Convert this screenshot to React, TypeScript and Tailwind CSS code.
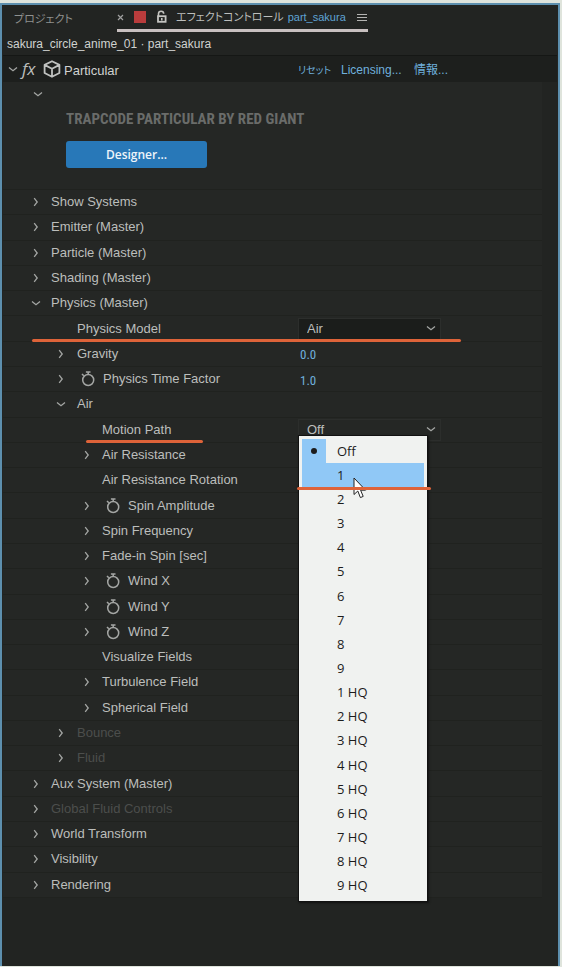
import React, { useState } from "react";

interface ParamRow {
  label: string;
  level: number;
  arrow?: "open" | "closed";
  watch?: boolean;
  disabled?: boolean;
  value?: string;
  select?: string[];
  mark?: "long" | "short";
}

const motionPaths = [
  "Off", "1", "2", "3", "4", "5", "6", "7", "8", "9",
  "1 HQ", "2 HQ", "3 HQ", "4 HQ", "5 HQ", "6 HQ", "7 HQ", "8 HQ", "9 HQ",
];

const rows: ParamRow[] = [
  { label: "Show Systems", level: 0, arrow: "closed" },
  { label: "Emitter (Master)", level: 0, arrow: "closed" },
  { label: "Particle (Master)", level: 0, arrow: "closed" },
  { label: "Shading (Master)", level: 0, arrow: "closed" },
  { label: "Physics (Master)", level: 0, arrow: "open" },
  { label: "Physics Model", level: 1, select: ["Air", "Bounce", "Fluid"], mark: "long" },
  { label: "Gravity", level: 1, arrow: "closed", value: "0.0" },
  { label: "Physics Time Factor", level: 1, arrow: "closed", watch: true, value: "1.0" },
  { label: "Air", level: 1, arrow: "open" },
  { label: "Motion Path", level: 2, select: motionPaths, mark: "short" },
  { label: "Air Resistance", level: 2, arrow: "closed" },
  { label: "Air Resistance Rotation", level: 2 },
  { label: "Spin Amplitude", level: 2, arrow: "closed", watch: true },
  { label: "Spin Frequency", level: 2, arrow: "closed" },
  { label: "Fade-in Spin [sec]", level: 2, arrow: "closed" },
  { label: "Wind X", level: 2, arrow: "closed", watch: true },
  { label: "Wind Y", level: 2, arrow: "closed", watch: true },
  { label: "Wind Z", level: 2, arrow: "closed", watch: true },
  { label: "Visualize Fields", level: 2 },
  { label: "Turbulence Field", level: 2, arrow: "closed" },
  { label: "Spherical Field", level: 2, arrow: "closed" },
  { label: "Bounce", level: 1, arrow: "closed", disabled: true },
  { label: "Fluid", level: 1, arrow: "closed", disabled: true },
  { label: "Aux System (Master)", level: 0, arrow: "closed" },
  { label: "Global Fluid Controls", level: 0, arrow: "closed", disabled: true },
  { label: "World Transform", level: 0, arrow: "closed" },
  { label: "Visibility", level: 0, arrow: "closed" },
  { label: "Rendering", level: 0, arrow: "closed" },
];

const indents = ["pl-[28px]", "pl-[53px]", "pl-[79px]"];

function Chevron({ open }: { open?: boolean }) {
  return (
    <svg width="10" height="10" viewBox="0 0 10 10" fill="none" stroke="#a4a6a4" strokeWidth="1.3">
      <path d={open ? "M1 3.5 L5 6.7 L9 3.5" : "M3.2 1.2 L6.2 5 L3.2 8.8"} />
    </svg>
  );
}

function Stopwatch() {
  return (
    <svg width="14" height="16" viewBox="0 0 14 16" fill="none" stroke="#a4a6a4" strokeWidth="1.5">
      <circle cx="7.2" cy="9" r="5.5" />
      <path d="M4.9 1 H9.5 M7.2 1 V3.6 M1 3 L2.8 4.8" />
    </svg>
  );
}

function MotionPathMenu({ current, onPick }: { current: string; onPick: (v: string) => void }) {
  return (
    <div
      role="listbox"
      aria-label="Motion Path"
      className="absolute left-0 top-[17px] z-10 flex h-[467px] w-[130px] flex-col border border-[#111] bg-[#f0f2f0] p-[3px] font-['Open_Sans','Noto_Sans',sans-serif] text-[13px] text-[#1c1c1c] shadow-[1px_1px_2px_#111]"
    >
      {motionPaths.map((name) => (
        <button
          key={name}
          role="option"
          aria-selected={name === current}
          onClick={() => onPick(name)}
          className={`flex min-h-0 grow basis-0 items-center text-left ${name === "1" ? "bg-[#90c8f6]" : ""}`}
        >
          <span
            className={`flex w-6 items-center justify-center self-stretch ${name === current ? "bg-[#90c8f6]" : ""}`}
          >
            {name === current && <span className="size-[6px] rounded-full bg-[#1c1c1c]" />}
          </span>
          <span className="pl-[11px] leading-4">{name}</span>
        </button>
      ))}
      <svg className="absolute left-[54px] top-[41px]" width="14" height="22" viewBox="0 0 14 22">
        <path
          d="M1 1 V17.5 L4.8 14 L7.4 20.6 L10.2 19.4 L7.6 13.2 H12.6 Z"
          fill="#fff"
          stroke="#222"
          strokeWidth="1"
        />
      </svg>
      <span className="absolute -left-[2px] top-[51px] h-[3px] w-[134px] rounded-full bg-[#de6339]" />
    </div>
  );
}

function Row({ row }: { row: ParamRow }) {
  const [value, setValue] = useState(row.select ? row.select[0] : "");
  const id = row.label.toLowerCase().replace(/ /g, "-");
  const isMotion = row.label === "Motion Path";

  return (
    <div className="relative flex min-h-0 grow basis-0 items-center border-b border-[#20221f]">
      <div className={`flex w-[295px] shrink-0 items-center ${indents[row.level]}`}>
        <span className={`flex shrink-0 ${row.level === 1 ? "w-[21px]" : "w-5"}`}>
          {row.arrow && (
            <button aria-label={`Toggle ${row.label}`}>
              <Chevron open={row.arrow === "open"} />
            </button>
          )}
        </span>
        {row.watch && (
          <button aria-label={`Animate ${row.label}`} className="w-[26px] shrink-0 pl-1">
            <Stopwatch />
          </button>
        )}
        <label
          htmlFor={row.select ? id : undefined}
          className={`whitespace-nowrap leading-4 ${row.disabled ? "text-[#4c4e4c]" : ""}`}
        >
          {row.label}
        </label>
      </div>
      {row.value && (
        <span className="pl-[2px] pt-[3px] font-['Roboto_Condensed',sans-serif] text-[13px] leading-4 text-[#6fb0dc]">
          {row.value}
        </span>
      )}
      {row.select && (
        <div className="relative h-[22px] w-[143px]">
          <select
            id={id}
            value={value}
            onChange={(e) => setValue(e.target.value)}
            className={`size-full appearance-none border border-[#2c2e2c] pl-[8px] leading-4 ${isMotion ? "bg-[#252725]" : "bg-[#1b1d1b]"}`}
          >
            {row.select.map((o) => (
              <option key={o}>{o}</option>
            ))}
          </select>
          <span className="pointer-events-none absolute right-[5px] top-[5px]">
            <Chevron open />
          </span>
        </div>
      )}
      {isMotion && (
        <div className="absolute left-[295px] top-0">
          <MotionPathMenu current={value} onPick={setValue} />
        </div>
      )}
      {row.mark === "long" && (
        <span className="absolute -bottom-px left-[29px] z-10 h-[3px] w-[429px] rounded-full bg-[#de6339]" />
      )}
      {row.mark === "short" && (
        <span className="absolute -bottom-px left-[83px] z-10 h-[3px] w-[117px] rounded-full bg-[#de6339]" />
      )}
    </div>
  );
}

export default function App() {
  return (
    <div className="flex min-h-screen flex-col bg-[#dfe4dc] pb-px pt-[3px] font-['Liberation_Sans','Noto_Sans_CJK_JP',sans-serif] text-[13px] text-[#bcbebc]">
      <div className="mr-[2px] flex grow flex-col border-x-2 border-t-2 border-[#5d8fae] bg-[#222422] px-px">
        <header className="flex h-[27px] shrink-0 items-stretch text-[12px] leading-4">
          <button className="w-[114px] pl-[11px] text-left text-[11px] text-[#8f918f] [font-feature-settings:'palt']">
            プロジェクト
          </button>
          <div className="flex items-center border-b-[3px] border-[#c8c0c0] pr-px">
            <button aria-label="Close tab" className="w-[17px]">
              <svg width="7" height="7" viewBox="0 0 7 7" stroke="#a0a0a0" strokeWidth="1.2">
                <path d="M1 1 L6 6 M6 1 L1 6" />
              </svg>
            </button>
            <span className="size-3 bg-[#b93c3c]" />
            <svg className="ml-[10px]" width="12" height="14" viewBox="0 0 12 14" fill="none" stroke="#c4c4c0">
              <path d="M2.5 6.5 V3.8 A2.6 2.6 0 0 1 7.7 3.8" strokeWidth="1.6" />
              <rect x="2" y="6.2" width="7.6" height="5.6" strokeWidth="1.8" />
              <path d="M5.8 8 V10.5" strokeWidth="1.6" />
            </svg>
            <span className="ml-2 whitespace-nowrap text-[11px] [font-feature-settings:'palt']">
              エフェクトコントロール
            </span>
            <span className="ml-1 text-[11px] text-[#5fa3d4]">part_sakura</span>
            <button aria-label="Panel menu" className="ml-[11px]">
              <svg width="10" height="9" viewBox="0 0 10 9" stroke="#b4b4b2" strokeWidth="1">
                <path d="M0 1.5 H10 M0 4.5 H10 M0 7.5 H10" />
              </svg>
            </button>
          </div>
        </header>
        <div className="flex h-6 shrink-0 items-center border-b border-[#151715] pl-1 pt-px text-[12px] leading-4 text-[#d0d2d0]">
          sakura_circle_anime_01 · part_sakura
        </div>
        <div className="flex h-[26px] shrink-0 items-center bg-[#1d1f1d] pl-[5px]">
          <button aria-label="Toggle Particular">
            <Chevron open />
          </button>
          <span className="ml-1 w-[20px] font-['Open_Sans',sans-serif] text-[17px] italic leading-5">fx</span>
          <svg className="ml-px" width="18" height="18" viewBox="0 0 18 18" fill="none" stroke="#c0c2c0" strokeWidth="1.8" strokeLinejoin="round">
            <path d="M9 1.2 L16.4 4.9 V13 L9 16.8 L1.6 13 V4.9 Z M1.6 4.9 L9 8.7 L16.4 4.9 M9 8.7 V16.8" />
          </svg>
          <span className="ml-[3px] w-[234px] pt-[3px] leading-4 text-[#d0d2d0]">Particular</span>
          <div className="flex items-baseline whitespace-nowrap pt-[3px] leading-4 text-[#6fb0dc] [font-feature-settings:'palt']">
            <a href="#reset" className="w-[43px] text-[10px]">リセット</a>
            <a href="#licensing" className="w-[73px] text-[12px]">Licensing...</a>
            <a href="#about" className="text-[12px]">情報...</a>
          </div>
        </div>
        <main className="mr-[15px] flex grow flex-col bg-[#252725]">
          <section className="flex h-[108px] shrink-0 flex-col items-start border-b border-[#20221f] pl-[30px] pt-[7px]">
            <button aria-label="Toggle header">
              <Chevron open />
            </button>
            <h1 className="ml-[33px] mt-2.5 whitespace-nowrap font-['Roboto_Condensed',sans-serif] text-[15px] font-bold leading-5 text-[#6a6c6a]">
              TRAPCODE PARTICULAR BY RED GIANT
            </h1>
            <button className="ml-[33px] mt-3 h-[27px] w-[141px] rounded-[3px] bg-[#2878b8] font-['Open_Sans',sans-serif] text-[12px] font-semibold text-[#eef4fa]">
              Designer...
            </button>
          </section>
          <div className="flex grow flex-col">
            {rows.map((row) => (
              <Row key={row.label} row={row} />
            ))}
          </div>
        </main>
        <div className="h-[68px] shrink-0" />
      </div>
    </div>
  );
}
